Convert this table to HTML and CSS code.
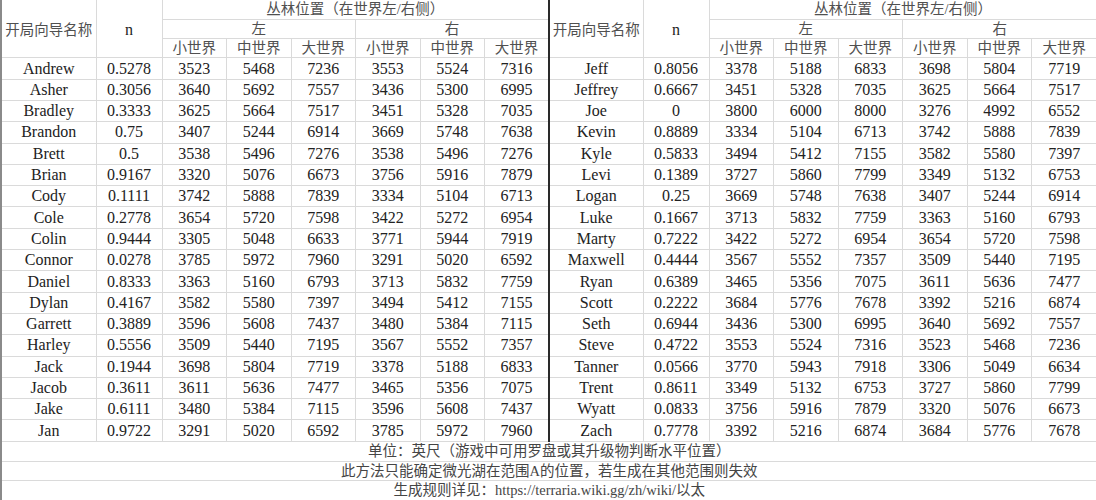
FILE: index.html
```html
<!DOCTYPE html>
<html lang="zh">
<head>
<meta charset="utf-8">
<title>丛林位置</title>
<link rel="stylesheet" href="styles.css">
</head>
<body>
<table class="sheet">
  <colgroup>
    <col class="c-name"><col class="c-n">
    <col class="c-d"><col class="c-d"><col class="c-d"><col class="c-d"><col class="c-d"><col class="c-d">
    <col class="c-name2"><col class="c-n">
    <col class="c-d"><col class="c-d"><col class="c-d"><col class="c-d"><col class="c-d"><col class="c-d2">
  </colgroup>
  <thead>
    <tr class="hrow">
      <th rowspan="3" class="cjk first">开局向导名称</th>
      <th rowspan="3" class="nhead">n</th>
      <th colspan="6" class="cjk">丛林位置（在世界左/右侧）</th>
      <th rowspan="3" class="cjk split">开局向导名称</th>
      <th rowspan="3" class="nhead">n</th>
      <th colspan="6" class="cjk">丛林位置（在世界左/右侧）</th>
    </tr>
    <tr class="hrow">
      <th colspan="3" class="cjk">左</th>
      <th colspan="3" class="cjk">右</th>
      <th colspan="3" class="cjk">左</th>
      <th colspan="3" class="cjk">右</th>
    </tr>
    <tr class="hrow">
      <th class="cjk">小世界</th><th class="cjk">中世界</th><th class="cjk">大世界</th>
      <th class="cjk">小世界</th><th class="cjk">中世界</th><th class="cjk">大世界</th>
      <th class="cjk">小世界</th><th class="cjk">中世界</th><th class="cjk">大世界</th>
      <th class="cjk">小世界</th><th class="cjk">中世界</th><th class="cjk">大世界</th>
    </tr>
  </thead>
  <tbody id="rows">
    <tr><td class="first">Andrew</td><td>0.5278</td><td>3523</td><td>5468</td><td>7236</td><td>3553</td><td>5524</td><td>7316</td><td class="split">Jeff</td><td>0.8056</td><td>3378</td><td>5188</td><td>6833</td><td>3698</td><td>5804</td><td>7719</td></tr>
    <tr><td class="first">Asher</td><td>0.3056</td><td>3640</td><td>5692</td><td>7557</td><td>3436</td><td>5300</td><td>6995</td><td class="split">Jeffrey</td><td>0.6667</td><td>3451</td><td>5328</td><td>7035</td><td>3625</td><td>5664</td><td>7517</td></tr>
    <tr><td class="first">Bradley</td><td>0.3333</td><td>3625</td><td>5664</td><td>7517</td><td>3451</td><td>5328</td><td>7035</td><td class="split">Joe</td><td>0</td><td>3800</td><td>6000</td><td>8000</td><td>3276</td><td>4992</td><td>6552</td></tr>
    <tr><td class="first">Brandon</td><td>0.75</td><td>3407</td><td>5244</td><td>6914</td><td>3669</td><td>5748</td><td>7638</td><td class="split">Kevin</td><td>0.8889</td><td>3334</td><td>5104</td><td>6713</td><td>3742</td><td>5888</td><td>7839</td></tr>
    <tr><td class="first">Brett</td><td>0.5</td><td>3538</td><td>5496</td><td>7276</td><td>3538</td><td>5496</td><td>7276</td><td class="split">Kyle</td><td>0.5833</td><td>3494</td><td>5412</td><td>7155</td><td>3582</td><td>5580</td><td>7397</td></tr>
    <tr><td class="first">Brian</td><td>0.9167</td><td>3320</td><td>5076</td><td>6673</td><td>3756</td><td>5916</td><td>7879</td><td class="split">Levi</td><td>0.1389</td><td>3727</td><td>5860</td><td>7799</td><td>3349</td><td>5132</td><td>6753</td></tr>
    <tr><td class="first">Cody</td><td>0.1111</td><td>3742</td><td>5888</td><td>7839</td><td>3334</td><td>5104</td><td>6713</td><td class="split">Logan</td><td>0.25</td><td>3669</td><td>5748</td><td>7638</td><td>3407</td><td>5244</td><td>6914</td></tr>
    <tr><td class="first">Cole</td><td>0.2778</td><td>3654</td><td>5720</td><td>7598</td><td>3422</td><td>5272</td><td>6954</td><td class="split">Luke</td><td>0.1667</td><td>3713</td><td>5832</td><td>7759</td><td>3363</td><td>5160</td><td>6793</td></tr>
    <tr><td class="first">Colin</td><td>0.9444</td><td>3305</td><td>5048</td><td>6633</td><td>3771</td><td>5944</td><td>7919</td><td class="split">Marty</td><td>0.7222</td><td>3422</td><td>5272</td><td>6954</td><td>3654</td><td>5720</td><td>7598</td></tr>
    <tr><td class="first">Connor</td><td>0.0278</td><td>3785</td><td>5972</td><td>7960</td><td>3291</td><td>5020</td><td>6592</td><td class="split">Maxwell</td><td>0.4444</td><td>3567</td><td>5552</td><td>7357</td><td>3509</td><td>5440</td><td>7195</td></tr>
    <tr><td class="first">Daniel</td><td>0.8333</td><td>3363</td><td>5160</td><td>6793</td><td>3713</td><td>5832</td><td>7759</td><td class="split">Ryan</td><td>0.6389</td><td>3465</td><td>5356</td><td>7075</td><td>3611</td><td>5636</td><td>7477</td></tr>
    <tr><td class="first">Dylan</td><td>0.4167</td><td>3582</td><td>5580</td><td>7397</td><td>3494</td><td>5412</td><td>7155</td><td class="split">Scott</td><td>0.2222</td><td>3684</td><td>5776</td><td>7678</td><td>3392</td><td>5216</td><td>6874</td></tr>
    <tr><td class="first">Garrett</td><td>0.3889</td><td>3596</td><td>5608</td><td>7437</td><td>3480</td><td>5384</td><td>7115</td><td class="split">Seth</td><td>0.6944</td><td>3436</td><td>5300</td><td>6995</td><td>3640</td><td>5692</td><td>7557</td></tr>
    <tr><td class="first">Harley</td><td>0.5556</td><td>3509</td><td>5440</td><td>7195</td><td>3567</td><td>5552</td><td>7357</td><td class="split">Steve</td><td>0.4722</td><td>3553</td><td>5524</td><td>7316</td><td>3523</td><td>5468</td><td>7236</td></tr>
    <tr><td class="first">Jack</td><td>0.1944</td><td>3698</td><td>5804</td><td>7719</td><td>3378</td><td>5188</td><td>6833</td><td class="split">Tanner</td><td>0.0566</td><td>3770</td><td>5943</td><td>7918</td><td>3306</td><td>5049</td><td>6634</td></tr>
    <tr><td class="first">Jacob</td><td>0.3611</td><td>3611</td><td>5636</td><td>7477</td><td>3465</td><td>5356</td><td>7075</td><td class="split">Trent</td><td>0.8611</td><td>3349</td><td>5132</td><td>6753</td><td>3727</td><td>5860</td><td>7799</td></tr>
    <tr><td class="first">Jake</td><td>0.6111</td><td>3480</td><td>5384</td><td>7115</td><td>3596</td><td>5608</td><td>7437</td><td class="split">Wyatt</td><td>0.0833</td><td>3756</td><td>5916</td><td>7879</td><td>3320</td><td>5076</td><td>6673</td></tr>
    <tr><td class="first">Jan</td><td>0.9722</td><td>3291</td><td>5020</td><td>6592</td><td>3785</td><td>5972</td><td>7960</td><td class="split">Zach</td><td>0.7778</td><td>3392</td><td>5216</td><td>6874</td><td>3684</td><td>5776</td><td>7678</td></tr>
  </tbody>
  <tfoot>
    <tr class="frow"><td colspan="16" class="note first">单位：英尺（游戏中可用罗盘或其升级物判断水平位置）</td></tr>
    <tr class="frow f2"><td colspan="16" class="note first">此方法只能确定微光湖在范围A的位置，若生成在其他范围则失效</td></tr>
    <tr class="frow"><td colspan="16" class="note first">生成规则详见：https://terraria.wiki.gg/zh/wiki/以太</td></tr>
  </tfoot>
</table>
</body>
</html>
```

FILE: styles.css
```css
html, body {
  margin: 0;
  padding: 0;
  background: #ffffff;
}

.sheet {
  width: 1096px;
  table-layout: fixed;
  border-collapse: collapse;
  font-family: "Liberation Serif", "Noto Sans CJK SC", serif;
  font-size: 16px;
  color: #222222;
}

.c-name { width: 95px; }
.c-n { width: 66px; }
.c-d { width: 64.5px; }
.c-name2 { width: 94px; }
.c-d2 { width: 65px; }

.sheet th,
.sheet td {
  padding: 0;
  text-align: center;
  vertical-align: middle;
  line-height: 16px;
  border: 1px solid #dadada;
  white-space: nowrap;
  overflow: hidden;
  font-weight: normal;
}

.sheet tr:first-child th { border-top: none; }

.hrow { height: 19.3px; }
tbody tr { height: 21.3px; }
.frow { height: 20px; }
.frow.f2 { height: 19px; }

.cjk {
  font-size: 14.5px;
  color: #505050;
  font-weight: 300;
}

.sheet th[rowspan] { padding-top: 3px; }

.nhead {
  font-weight: bold;
}

.sheet .first { border-left: 2px solid #8a8a8a; }
.sheet .split { border-left: 2px solid #2a2a2a; }

.sheet td:last-child,
.sheet th:last-child { border-right: none; }

.note {
  font-size: 14.5px;
  color: #454545;
}
.sheet tfoot tr:last-child td { border-bottom: none; }
```
